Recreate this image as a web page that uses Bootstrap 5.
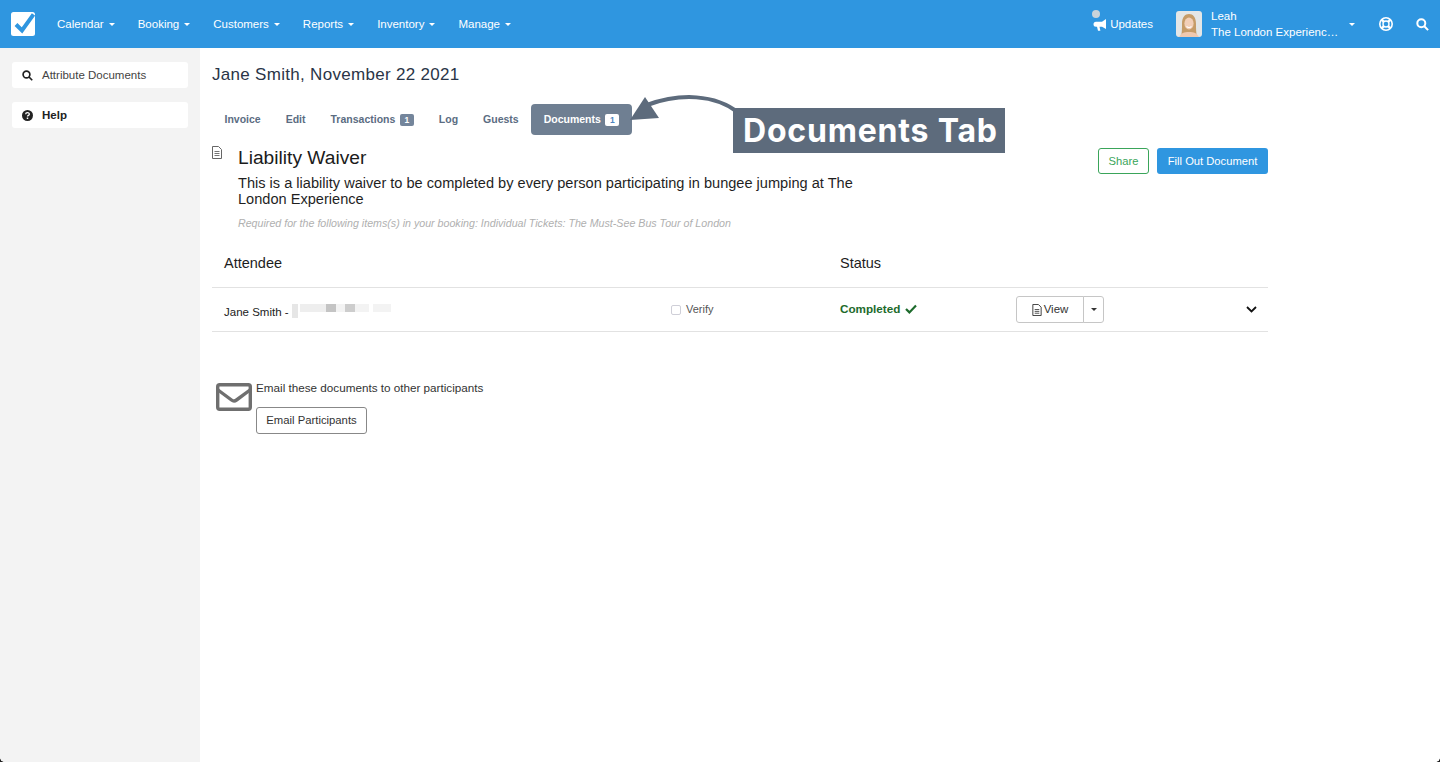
<!DOCTYPE html>
<html lang="en">
<head>
    <meta charset="UTF-8">
    <meta name="viewport" content="width=device-width, initial-scale=1.0">
    <title>Liability Waiver</title>
    <link href="https://cdn.jsdelivr.net/npm/bootstrap@5.3.2/dist/css/bootstrap.min.css" rel="stylesheet">
    <style>
        html, body { height: 100%; overflow: hidden; }
        body { font-family: "Liberation Sans", Arial, sans-serif; color: #222; background: #fff; position: relative; }
        .topbar { height: 48px; background: #2f96e0; padding: 0 11px; flex-wrap: nowrap; }
        .brand-box { width: 24px; height: 24px; margin-right: 22px; flex: none; }
        .topbar .nav-link { color: #fff; font-size: 11.5px; padding: 1px 0 0; white-space: nowrap; }
        .topbar .main-links { gap: 23px; }
        .topbar .dropdown-toggle::after { margin-left: 5px; vertical-align: 2px; border-top-width: 3px; border-left-width: 3px; border-right-width: 3px; }
        .updates-link { position: relative; display: flex; align-items: center; gap: 3px; }
        .updates-dot { position: absolute; left: -1px; top: -5px; width: 8px; height: 8px; border-radius: 50%; background: #c9d3da; }
        .user-block { width: 194px; margin-left: 23px; color: #fff; font-size: 11.5px; line-height: 16px; }
        .user-text { width: 138px; margin-left: 9px; white-space: nowrap; }
        .user-block .dropdown-toggle::after { margin-left: 0; }
        .page-body { height: 714px; }
        .side-col { width: 200px; flex: none; background: #f3f3f3; padding: 14px 12px; }
        .side-item { height: 26px; background: #fff; border-radius: 3px; padding: 1px 10px 0; font-size: 11.5px; color: #444; margin-bottom: 14px; gap: 9px; }
        .side-item.help-item { font-weight: 700; color: #222; }
        .content-col { width: 1056px; margin-left: 12px; flex: none; }
        .booking-title { font-size: 17px; line-height: 22px; font-weight: 400; color: #2a3547; margin: 16px 0 18px; letter-spacing: .3px; }
        .tab-row { height: 31px; }
        .tab-row .nav-link { height: 31px; padding: 0 12.5px; font-size: 10.5px; font-weight: 700; color: #5b6c82; border-radius: 4px; display: flex; align-items: center; gap: 4.5px; }
        .tab-row .nav-link.active { background: #6f7f92; color: #fff; }
        .tab-count { font-size: 8.5px; font-weight: 700; line-height: 12px; width: 14px; height: 12px; text-align: center; border-radius: 2px; background: #74859b; color: #fff; }
        .active .tab-count { background: #fff; color: #4f86c0; }
        .doc-head { margin-top: 11px; height: 97px; }
        .doc-icon { width: 26px; flex: none; }
        .doc-title { font-size: 19.2px; line-height: 24px; font-weight: 400; color: #1b1b1b; margin: 0 0 5px; }
        .doc-desc { font-size: 14.58px; line-height: 16px; color: #1f1f1f; margin: 0 0 9px; width: 640px; }
        .doc-note { font-size: 10.67px; line-height: 14px; font-style: italic; color: #b0b0b0; margin: 0; white-space: nowrap; }
        .doc-actions { padding-top: 2px; }
        .btn-share { font-size: 11.2px; height: 26px; width: 51px; padding: 0; color: #3aa55a; border: 1px solid #3aa55a; border-radius: 3px; background: #fff; }
        .btn-fill { font-size: 11.2px; height: 26px; width: 111px; padding: 0; color: #fff; border: 0; border-radius: 3px; background: #2f96e0; }
        .head-row { height: 45px; font-size: 14.5px; color: #1d1d1d; border-bottom: 1px solid #e2e2e2; padding-bottom: 2px; }
        .att-row { height: 44px; border-bottom: 1px solid #e2e2e2; font-size: 11.5px; }
        .cell-name { width: 459px; padding: 7px 0 0 12px; flex: none; }
        .cell-verify { width: 169px; flex: none; color: #555; font-size: 11px; gap: 5px; }
        .cell-status { width: 176px; flex: none; padding-bottom: 1px; }
        .head-attendee { width: 628px; padding-left: 12px; flex: none; }
        .verify-box { width: 10px; height: 10px; border: 1px solid #cfcfd8; border-radius: 2px; }
        .blur-strip { width: 104px; height: 12px; position: relative; margin: -6px 0 0 3px; }
        .blur-bit { position: absolute; top: 0; height: 8px; background: #eee; }
        .status-done { color: #1d6b2c; font-weight: 700; gap: 5px; font-size: 11.7px; }
        .view-group { height: 27px; }
        .view-main, .view-caret { background: #fff; border: 1px solid #c6c6c6; font-size: 11.5px; color: #333; display: flex; align-items: center; }
        .view-main { width: 68px; justify-content: center; border-radius: 3px 0 0 3px; gap: 2px; }
        .view-caret { width: 21px; margin-left: -1px; justify-content: center; border-radius: 0 3px 3px 0; }
        .view-caret::after { content: ""; border-top: 3px solid #333; border-left: 3px solid transparent; border-right: 3px solid transparent; }
        .row-chevron { margin-left: auto; margin-right: 11px; }
        .mail-block { margin-top: 49px; padding-left: 4px; }
        .mail-icon { width: 36px; height: 28px; margin-top: 2px; margin-right: 4px; flex: none; }
        .mail-text { font-size: 11.7px; line-height: 14px; color: #333; margin: 0 0 12px; }
        .btn-mail { font-size: 11.3px; height: 27px; width: 111px; padding: 0; border: 1px solid #888; border-radius: 3px; background: #fff; color: #333; }
        .callout-box { position: absolute; left: 733px; top: 108px; width: 272px; height: 45px; background: #5d6b7c; color: #fff; font-family: "Inter", sans-serif; font-weight: 700; font-size: 32px; line-height: 45px; padding-left: 10px; white-space: nowrap; letter-spacing: .8px; }
        .callout-arrow { position: absolute; left: 625px; top: 90px; }
        .corner-l, .corner-r { position: absolute; bottom: 0; width: 4px; height: 4px; }
        .corner-l { left: 0; background: radial-gradient(circle at 100% 0, transparent 3.5px, #222 4px); }
        .corner-r { right: 0; background: radial-gradient(circle at 0 0, transparent 3.5px, #222 4px); }
    </style>
</head>
<body>
    <!-- top navigation -->
    <nav class="topbar d-flex align-items-center">
        <svg class="brand-box" viewBox="0 0 24 24">
            <rect width="24" height="24" rx="2.5" fill="#fff"/>
            <path d="M5 12.5l6 6L22.5 2.5" fill="none" stroke="#2f96e0" stroke-width="4"/>
        </svg>
        <div class="main-links d-flex">
            <a class="nav-link dropdown-toggle" href="#">Calendar</a>
            <a class="nav-link dropdown-toggle" href="#">Booking</a>
            <a class="nav-link dropdown-toggle" href="#">Customers</a>
            <a class="nav-link dropdown-toggle" href="#">Reports</a>
            <a class="nav-link dropdown-toggle" href="#">Inventory</a>
            <a class="nav-link dropdown-toggle" href="#">Manage</a>
        </div>
        <div class="ms-auto d-flex align-items-center">
            <a class="nav-link updates-link" href="#">
                <span class="updates-dot"></span>
                <svg width="14" height="14" viewBox="0 0 14 14"><path d="M13 1v10L9 8.7H6.5l.9 4H5l-1-4H3a2.5 2.5 0 0 1 0-5h6z" fill="#fff"/></svg>
                Updates
            </a>
            <div class="user-block d-flex align-items-center">
                <svg width="26" height="26" viewBox="0 0 26 26">
                    <clipPath id="av"><rect width="26" height="26" rx="3"/></clipPath>
                    <g clip-path="url(#av)">
                        <rect width="26" height="26" fill="#e4e6e6"/>
                        <path d="M5 26c1-5 1-9 1-13C6 6 9 3 13 3s7 3 7 10c0 4 0 8 1 13z" fill="#c69c68"/>
                        <path d="M3 26c2-4 5-5 10-5s8 1 10 5z" fill="#efc9b0"/>
                        <ellipse cx="13" cy="12.5" rx="4.6" ry="6" fill="#f2cfb8"/>
                        <path d="M10.5 15.5q2.5 2 5 0" stroke="#fff" stroke-width="1.2" fill="none"/>
                    </g>
                </svg>
                <div class="user-text">
                    <div>Leah</div>
                    <div>The London Experienc…</div>
                </div>
                <span class="dropdown-toggle"></span>
            </div>
            <svg class="ms-2" width="16" height="16" viewBox="0 0 16 16" fill="none" stroke="#fff">
                <circle cx="8" cy="8" r="6.2" stroke-width="1.6"/>
                <circle cx="8" cy="8" r="3" stroke-width="1.4"/>
                <path d="M3.6 3.6l2.3 2.3M12.4 3.6l-2.3 2.3M3.6 12.4l2.3-2.3M12.4 12.4l-2.3-2.3" stroke-width="2.2"/>
            </svg>
            <svg style="margin-left:22px" width="13" height="13" viewBox="0 0 13 13" fill="none" stroke="#fff" stroke-width="2">
                <circle cx="5.3" cy="5.3" r="4"/><path d="M8.3 8.3l3.8 3.8"/>
            </svg>
        </div>
    </nav>

    <div class="page-body d-flex">
        <!-- left column -->
        <aside class="side-col">
            <div class="side-item d-flex align-items-center">
                <svg width="11" height="11" viewBox="0 0 13 13" fill="none" stroke="#222" stroke-width="2"><circle cx="5.3" cy="5.3" r="4"/><path d="M8.3 8.3l3.8 3.8"/></svg>
                Attribute Documents
            </div>
            <div class="side-item help-item d-flex align-items-center">
                <svg width="11" height="11" viewBox="0 0 12 12"><circle cx="6" cy="6" r="6" fill="#222"/><path d="M4 4.6C4 2.4 8 2.4 8 4.5 8 6 6 5.8 6 7.2" fill="none" stroke="#fff" stroke-width="1.4"/><rect x="5.2" y="8.2" width="1.6" height="1.6" fill="#fff"/></svg>
                Help
            </div>
        </aside>

        <!-- main column -->
        <main class="content-col">
            <h1 class="booking-title">Jane Smith, November 22 2021</h1>

            <div class="nav tab-row">
                <a class="nav-link" href="#">Invoice</a>
                <a class="nav-link" href="#">Edit</a>
                <a class="nav-link" href="#">Transactions <span class="tab-count">1</span></a>
                <a class="nav-link" href="#">Log</a>
                <a class="nav-link" href="#">Guests</a>
                <a class="nav-link active" href="#">Documents <span class="tab-count">1</span></a>
            </div>

            <div class="doc-head d-flex">
                <div class="doc-icon">
                    <svg class="d-block" width="10" height="13" viewBox="0 0 10 13" fill="none" stroke="#666">
                        <path d="M.5.5h6l3 3v9h-9z"/><path d="M2.5 5.5h5M2.5 7.5h5M2.5 9.5h5" stroke-width=".9"/>
                    </svg>
                </div>
                <div class="flex-grow-1">
                    <h2 class="doc-title">Liability Waiver</h2>
                    <p class="doc-desc">This is a liability waiver to be completed by every person participating in bungee jumping at The London Experience</p>
                    <p class="doc-note">Required for the following items(s) in your booking: Individual Tickets: The Must-See Bus Tour of London</p>
                </div>
                <div class="doc-actions d-flex gap-2 align-items-start">
                    <button class="btn btn-share" type="button">Share</button>
                    <button class="btn btn-fill" type="button">Fill Out Document</button>
                </div>
            </div>

            <div class="head-row d-flex align-items-center">
                <div class="head-attendee">Attendee</div>
                <div>Status</div>
            </div>

            <div class="att-row d-flex align-items-center">
                <div class="cell-name d-flex align-items-center">
                    Jane Smith -
                    <span class="blur-strip">
                        <span class="blur-bit" style="left:0;width:6px;height:14px;background:#e6e6e6"></span>
                        <span class="blur-bit" style="left:8px;width:26px"></span>
                        <span class="blur-bit" style="left:34px;width:10px;background:#c4c4c4"></span>
                        <span class="blur-bit" style="left:44px;width:9px;background:#f3f3f3"></span>
                        <span class="blur-bit" style="left:53px;width:10px;background:#cdcdcd"></span>
                        <span class="blur-bit" style="left:63px;width:14px;background:#f3f3f3"></span>
                        <span class="blur-bit" style="left:81px;width:18px;background:#f3f3f3"></span>
                    </span>
                </div>
                <div class="cell-verify d-flex align-items-center"><span class="verify-box"></span>Verify</div>
                <div class="cell-status">
                    <span class="status-done d-flex align-items-center">Completed
                        <svg width="12" height="10" viewBox="0 0 12 10" fill="none" stroke="#1d6b2c" stroke-width="2.2"><path d="M1 5l3.4 3.4L11 1.6"/></svg>
                    </span>
                </div>
                <div class="view-group d-flex">
                    <div class="view-main">
                        <svg width="10" height="12" viewBox="0 0 10 13" fill="none" stroke="#333"><path d="M.5.5h6l3 3v9h-9z"/><path d="M2.5 6h5M2.5 8h5M2.5 10h5" stroke-width=".9"/></svg>
                        View
                    </div>
                    <div class="view-caret"></div>
                </div>
                <svg class="row-chevron" width="11" height="7" viewBox="0 0 11 7" fill="none" stroke="#111" stroke-width="1.8"><path d="M1 1l4.5 4.5L10 1"/></svg>
            </div>

            <div class="mail-block d-flex">
                <svg class="mail-icon" viewBox="0 0 36 28" fill="none" stroke="#6f6f6f" stroke-width="3.4">
                    <rect x="1.7" y="1.7" width="32.6" height="24.6" rx="2"/>
                    <path d="M2 7l13.5 10q2.5 1.8 5 0L34 7"/>
                </svg>
                <div>
                    <p class="mail-text">Email these documents to other participants</p>
                    <button class="btn btn-mail" type="button">Email Participants</button>
                </div>
            </div>
        </main>
    </div>

    <!-- annotation over the page -->
    <svg class="callout-arrow" width="120" height="36" viewBox="0 0 120 36">
        <path d="M114 23C90 4 55 3 22 15" fill="none" stroke="#5d6b7c" stroke-width="4"/>
        <path d="M5 30L20 7l14 21z" fill="#5d6b7c"/>
    </svg>
    <div class="callout-box">Documents Tab</div>

    <span class="corner-l"></span>
    <span class="corner-r"></span>

    <script src="https://cdn.jsdelivr.net/npm/bootstrap@5.3.2/dist/js/bootstrap.bundle.min.js"></script>
</body>
</html>
